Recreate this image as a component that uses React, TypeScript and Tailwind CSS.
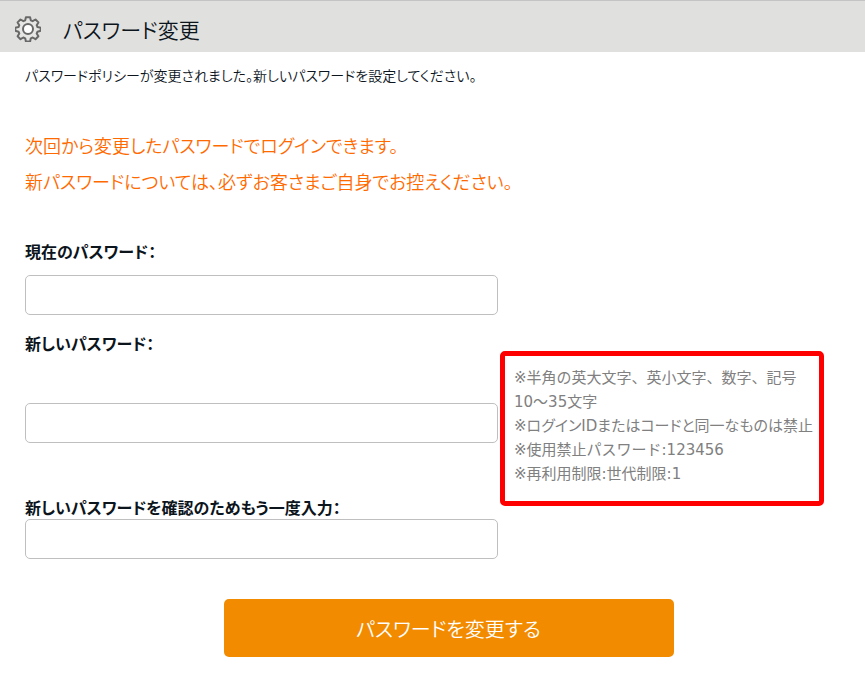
import type { InputHTMLAttributes } from "react";

function GearIcon() {
  return (
    <svg viewBox="0 0 26 26" className="size-[26px] shrink-0" aria-hidden="true">
      <path
        d="M10.9 1.2h4.2l.7 3.2 1.8.8 2.9-1.7 2.9 2.9-1.7 2.8.8 1.9 3.2.7v3l-3.2.9-.8 1.8 1.7 2.8-2.9 2.9-2.8-1.7-1.9.8-.7 3.2h-4.2l-.7-3.2-1.9-.8-2.8 1.7-2.9-2.9 1.7-2.8-.8-1.8-3.2-.9v-3l3.2-.7.8-1.9-1.7-2.8 2.9-2.9 2.9 1.7 1.8-.8z"
        fill="#e6e6e5"
        stroke="#686868"
        strokeWidth="2"
        strokeLinejoin="round"
      />
      <circle cx="13" cy="13" r="5" fill="#fff" stroke="#686868" strokeWidth="2" />
    </svg>
  );
}

function PasswordInput(props: InputHTMLAttributes<HTMLInputElement>) {
  return (
    <input
      type="password"
      className="block h-10 w-full max-w-[473px] rounded-[5px] border border-[#bfbfbf] bg-white px-3 text-base outline-none focus:border-[#f38b00]"
      {...props}
    />
  );
}

const labelStyle = "block text-[16px] leading-6 font-bold text-[#0c141c]";

export default function App() {
  return (
    <div
      lang="ja"
      className="min-h-screen bg-white font-['Noto_Sans_CJK_JP',sans-serif] font-[350] text-[#0c141c] [font-feature-settings:'palt']"
    >
      <header className="flex h-[52px] items-center gap-[22px] border-t border-[#c4c4c4] bg-[#e0e0de] px-[15px] pt-1">
        <GearIcon />
        <h1 className="text-[21px] leading-8 font-[350]">パスワード変更</h1>
      </header>

      <main className="px-[25px]">
        <p className="pt-[11px] text-[14px] leading-6">
          パスワードポリシーが変更されました。新しいパスワードを設定してください。
        </p>

        <div className="mt-10 text-[18px] leading-9 text-[#ff6a00]">
          <p>次回から変更したパスワードでログインできます。</p>
          <p>新パスワードについては、必ずお客さまご自身でお控えください。</p>
        </div>

        <form className="mt-10" onSubmit={(event) => event.preventDefault()}>
          <label htmlFor="current" className={labelStyle}>
            現在のパスワード：
          </label>
          <div className="mt-3">
            <PasswordInput id="current" autoComplete="current-password" />
          </div>

          <label htmlFor="next" className={`${labelStyle} mt-4`}>
            新しいパスワード：
          </label>
          <div className="-mt-1 flex items-start gap-0.5">
            <div className="w-full max-w-[473px] pt-[52px]">
              <PasswordInput id="next" autoComplete="new-password" aria-describedby="rules" />
            </div>
            <ul
              id="rules"
              className="w-[324px] shrink-0 rounded-[5px] border-5 border-[#ff0000] pt-2.5 pb-[15px] pl-[9px] font-['DejaVu_Sans','Noto_Sans_CJK_JP',sans-serif] text-[15px] leading-6 font-normal text-[#808080] [font-feature-settings:normal]"
            >
              <li>
                ※半角の英大文字、英小文字、数字、記号
                <br />
                10～35文字
              </li>
              <li className="[font-feature-settings:'palt']">
                ※ログインIDまたはコードと同一なものは禁止
              </li>
              <li>※使用禁止パスワード:123456</li>
              <li>※再利用制限:世代制限:1</li>
            </ul>
          </div>

          <label htmlFor="confirm" className={`${labelStyle} -mt-[11px]`}>
            新しいパスワードを確認のためもう一度入力：
          </label>
          <PasswordInput id="confirm" autoComplete="new-password" />

          <div className="mt-10 flex justify-center pb-9 pl-8">
            <button
              type="submit"
              className="h-[58px] w-full max-w-[450px] rounded-[5px] bg-[#f38b00] pt-0.5 text-[20px] leading-8 text-white"
            >
              パスワードを変更する
            </button>
          </div>
        </form>
      </main>
    </div>
  );
}
